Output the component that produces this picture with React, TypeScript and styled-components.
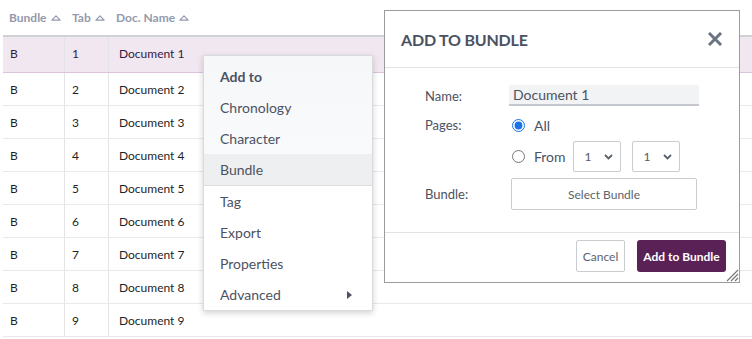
import React from "react";
import styled, { createGlobalStyle } from "styled-components";

const Global = createGlobalStyle`
  html, body { margin: 0; padding: 0; background: #fff; }
  body { font-family: Lato, "Open Sans", Arial, sans-serif; }
  * { box-sizing: border-box; }
`;

const Page = styled.div`
  position: relative;
  width: 752px;
  height: 339px;
  overflow: hidden;
  padding-left: 3px;
`;

const Table = styled.div`
  display: flex;
  flex-direction: column;
`;

const HeadRow = styled.div`
  display: grid;
  grid-template-columns: 62px 44px 1fr;
  height: 37px;
  border-bottom: 2px solid #cfd1d5;
`;

const HeadCell = styled.div<{ $pl: number }>`
  display: flex;
  align-items: center;
  gap: 4px;
  padding-left: ${(p) => p.$pl}px;
  font-size: 12px;
  font-weight: 700;
  color: #939aab;
`;

const Row = styled.div<{ $active?: boolean }>`
  display: grid;
  grid-template-columns: 62px 44px 1fr;
  height: ${(p) => (p.$active ? 36 : 33)}px;
  background: ${(p) => (p.$active ? "#f1e7f0" : "#fff")};
  border-bottom: 1px solid ${(p) => (p.$active ? "#dcc3da" : "#e8e9eb")};
`;

const Cell = styled.div<{ $pl: number; $active?: boolean; $divider?: boolean }>`
  display: flex;
  align-items: center;
  padding-left: ${(p) => p.$pl}px;
  padding-bottom: ${(p) => (p.$active ? 2 : 0)}px;
  font-size: 12px;
  color: ${(p) => (p.$active ? "#351a3f" : "#1f1f24")};
  border-right: ${(p) => (p.$divider ? "1px solid #e4e4e7" : "none")};
`;

const SortIcon = () => (
  <svg width="10" height="6" viewBox="0 0 10 6">
    <path d="M0.9 5.2 L5 0.9 L9.1 5.2 Z" fill="none" stroke="#939aab" strokeWidth="1.2" strokeLinejoin="round" />
  </svg>
);

/* ---------- Context menu ---------- */
const Menu = styled.div`
  position: absolute;
  left: 203px;
  top: 55px;
  width: 170px;
  background: #fff;
  border: 1px solid #d9dadd;
  box-shadow: 0 2px 6px rgba(0, 0, 0, 0.18);
  display: flex;
  flex-direction: column;
`;

const MenuGroup = styled.div<{ $tinted?: boolean }>`
  display: flex;
  flex-direction: column;
  padding-top: ${(p) => (p.$tinted ? 5 : 0)}px;
  background: ${(p) => (p.$tinted ? "linear-gradient(#f6f7f9, #fafbfc)" : "#fff")};
  border-bottom: ${(p) => (p.$tinted ? "1px solid #dcdde0" : "none")};
`;

const MenuItem = styled.div<{ $title?: boolean; $hover?: boolean }>`
  height: 31px;
  display: flex;
  align-items: center;
  justify-content: space-between;
  padding: 0 20px 0 16px;
  font-size: 14px;
  font-weight: ${(p) => (p.$title ? 700 : 400)};
  color: #4c5262;
  background: ${(p) => (p.$hover ? "#eeeff1" : "transparent")};
`;

const Caret = () => (
  <svg width="5" height="8" viewBox="0 0 5 8">
    <path d="M0 0 L5 4 L0 8 Z" fill="#4c5262" />
  </svg>
);

/* ---------- Dialog ---------- */
const Dialog = styled.div`
  position: absolute;
  left: 384px;
  top: 10px;
  width: 356px;
  height: 273px;
  background: #fff;
  border: 1px solid #9b9b9b;
  display: flex;
  flex-direction: column;
`;

const DialogHeader = styled.div`
  height: 57px;
  display: flex;
  align-items: center;
  justify-content: space-between;
  padding: 0 17px 0 16px;
  border-bottom: 1px solid #e1e2e5;
`;

const DialogTitle = styled.div`
  font-size: 16px;
  font-weight: 700;
  color: #4a5261;
  letter-spacing: -0.2px;
`;

const DialogBody = styled.div`
  flex: 1;
  display: flex;
  flex-direction: column;
  padding: 17px 0 0 40px;
  border-bottom: 1px solid #e1e2e5;
`;

const FieldRow = styled.div<{ $mt?: number }>`
  display: grid;
  grid-template-columns: 86px 1fr;
  margin-top: ${(p) => p.$mt ?? 0}px;
`;

const Label = styled.div<{ $h: number }>`
  height: ${(p) => p.$h}px;
  display: flex;
  align-items: center;
  font-size: 13px;
  color: #4c5262;
`;

const NameInput = styled.div`
  width: 190px;
  height: 21px;
  margin-left: -2px;
  padding-left: 4px;
  display: flex;
  align-items: center;
  background: #f2f3f5;
  border-bottom: 2px solid #c5c9cf;
  font-size: 14px;
  color: #4c5262;
  border-radius: 2px 2px 0 0;
`;

const OptionStack = styled.div`
  display: flex;
  flex-direction: column;
  gap: 6px;
`;

const OptionLine = styled.div<{ $h: number }>`
  height: ${(p) => p.$h}px;
  display: flex;
  align-items: center;
  font-size: 14px;
  color: #4c5262;
`;

const Radio = styled.input`
  width: 13px;
  height: 13px;
  margin: 0 9px 0 1px;
  accent-color: #1a73e8;
`;

const FakeSelect = styled.div<{ $ml: number }>`
  width: 48px;
  height: 31px;
  margin-left: ${(p) => p.$ml}px;
  border: 1px solid #c9ccd1;
  border-radius: 2px;
  display: flex;
  align-items: center;
  justify-content: space-between;
  padding: 0 7px 0 11px;
  font-size: 12px;
  color: #555b66;
`;

const Chevron = () => (
  <svg width="9" height="6" viewBox="0 0 9 6">
    <path d="M1 1 L4.5 4.5 L8 1" fill="none" stroke="#5a606b" strokeWidth="1.8" />
  </svg>
);

const OutlineButton = styled.div<{ $w: number }>`
  width: ${(p) => p.$w}px;
  height: 32px;
  border: 1px solid #c9ccd1;
  border-radius: 2px;
  display: flex;
  align-items: center;
  justify-content: center;
  font-size: 12px;
  color: #5d636e;
  background: #fff;
`;

const DialogFooter = styled.div`
  height: 49px;
  display: flex;
  justify-content: flex-end;
  align-items: flex-start;
  gap: 12px;
  padding: 7px 13px 0 0;
  position: relative;
`;

const PrimaryButton = styled.div`
  width: 89px;
  height: 32px;
  border-radius: 3px;
  background: #5a2157;
  color: #fff;
  font-size: 12px;
  font-weight: 700;
  display: flex;
  align-items: center;
  justify-content: center;
`;

const Resize = styled.svg`
  position: absolute;
  right: 0;
  bottom: 0;
`;

const docs = [1, 2, 3, 4, 5, 6, 7, 8, 9];

export default function App() {
  return (
    <>
      <Global />
      <Page>
        <Table>
          <HeadRow>
            <HeadCell $pl={6}>Bundle <SortIcon /></HeadCell>
            <HeadCell $pl={7}>Tab <SortIcon /></HeadCell>
            <HeadCell $pl={7}>Doc. Name <SortIcon /></HeadCell>
          </HeadRow>
          {docs.map((n) => (
            <Row key={n} $active={n === 1}>
              <Cell $pl={7} $divider $active={n === 1}>B</Cell>
              <Cell $pl={7} $divider $active={n === 1}>{n}</Cell>
              <Cell $pl={10} $active={n === 1}>Document {n}</Cell>
            </Row>
          ))}
        </Table>

        <Menu>
          <MenuGroup $tinted>
            <MenuItem $title>Add to</MenuItem>
            <MenuItem>Chronology</MenuItem>
            <MenuItem>Character</MenuItem>
            <MenuItem $hover>Bundle</MenuItem>
          </MenuGroup>
          <MenuGroup>
            <MenuItem>Tag</MenuItem>
            <MenuItem>Export</MenuItem>
            <MenuItem>Properties</MenuItem>
            <MenuItem>
              Advanced <Caret />
            </MenuItem>
          </MenuGroup>
        </Menu>

        <Dialog>
          <DialogHeader>
            <DialogTitle>ADD TO BUNDLE</DialogTitle>
            <svg width="14" height="14" viewBox="0 0 14 14">
              <path d="M2 2 L12 12 M12 2 L2 12" stroke="#6b7482" strokeWidth="3" strokeLinecap="square" />
            </svg>
          </DialogHeader>
          <DialogBody>
            <FieldRow>
              <Label $h={21}>Name:</Label>
              <NameInput>Document 1</NameInput>
            </FieldRow>
            <FieldRow $mt={9}>
              <Label $h={20}>Pages:</Label>
              <OptionStack>
                <OptionLine $h={20}>
                  <Radio type="radio" name="pages" defaultChecked />
                  All
                </OptionLine>
                <OptionLine $h={31}>
                  <Radio type="radio" name="pages" />
                  From
                  <FakeSelect $ml={7}>1 <Chevron /></FakeSelect>
                  <FakeSelect $ml={11}>1 <Chevron /></FakeSelect>
                </OptionLine>
              </OptionStack>
            </FieldRow>
            <FieldRow $mt={6}>
              <Label $h={32}>Bundle:</Label>
              <OutlineButton $w={186}>Select Bundle</OutlineButton>
            </FieldRow>
          </DialogBody>
          <DialogFooter>
            <OutlineButton $w={49}>Cancel</OutlineButton>
            <PrimaryButton>Add to Bundle</PrimaryButton>
            <Resize width="14" height="14" viewBox="0 0 14 14">
              <path d="M13 2 L2 13 M13 6 L6 13 M13 10 L10 13" stroke="#777" strokeWidth="1.2" />
            </Resize>
          </DialogFooter>
        </Dialog>
      </Page>
    </>
  );
}
